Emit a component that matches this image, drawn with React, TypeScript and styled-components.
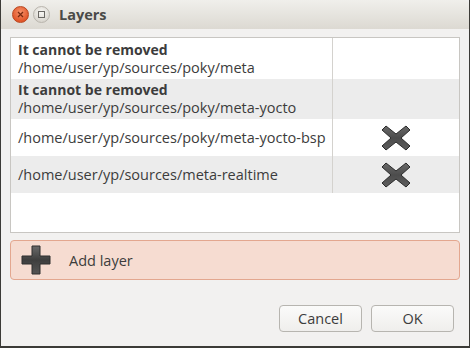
import React from "react";
import styled, { createGlobalStyle } from "styled-components";

const Global = createGlobalStyle`
  html, body { margin: 0; padding: 0; background: #3c3b37; }
  body { width: 470px; height: 348px; overflow: hidden; }
  * { box-sizing: border-box; }
`;

const Window = styled.div`
  width: 470px;
  height: 348px;
  display: flex;
  flex-direction: column;
  background: #f2f1f0;
  border: 1px solid #3c3b37;
  border-top: none;
  border-bottom-width: 2px;
  font-family: "Open Sans", "DejaVu Sans", sans-serif;
  color: #3c3c3c;
`;

const TitleBar = styled.div`
  height: 29px;
  flex: none;
  display: flex;
  align-items: center;
  padding-left: 11px;
  gap: 4px;
  background: linear-gradient(#f0efeb, #dcd9d2);
  border-top-left-radius: 5px;
  border-top-right-radius: 5px;
`;

const WinButton = styled.div<{ $close?: boolean }>`
  width: 17px;
  height: 17px;
  border-radius: 50%;
  display: flex;
  align-items: center;
  justify-content: center;
  background: ${(p) =>
    p.$close
      ? "radial-gradient(circle at 50% 35%, #f6926a, #e2572a 70%)"
      : "radial-gradient(circle at 50% 35%, #f8f7f4, #d9d6cf 75%)"};
  border: 1px solid ${(p) => (p.$close ? "#b8461f" : "#b9b5ad")};
`;

const Title = styled.div`
  margin-left: 5px;
  font-weight: bold;
  font-size: 14.5px;
  color: #4a4a48;
`;

const Body = styled.div`
  flex: 1;
  display: flex;
  flex-direction: column;
  padding: 8px 9px 0 9px;
`;

const ListFrame = styled.div`
  height: 196px;
  border: 1px solid #c8c6c2;
  background: #ffffff;
  display: flex;
  flex-direction: column;
`;

const Row = styled.div<{ $alt?: boolean; $h: number }>`
  display: grid;
  grid-template-columns: 322px 1fr;
  height: ${(p) => p.$h}px;
  background: ${(p) => (p.$alt ? "#ececec" : "#ffffff")};
`;

const PathCell = styled.div`
  display: flex;
  flex-direction: column;
  justify-content: center;
  padding-left: 7px;
  border-right: 1px solid #d4d2ce;
  font-size: 14.5px;
  line-height: 18px;
  color: #3c3c3c;
  white-space: nowrap;
`;

const Bold = styled.div`
  font-weight: bold;
  font-size: 14px;
`;

const ActionCell = styled.div`
  display: flex;
  align-items: center;
  justify-content: center;
`;

const AddBar = styled.div`
  margin-top: 7px;
  height: 40px;
  display: flex;
  align-items: center;
  padding-left: 10px;
  gap: 18px;
  background: #f6dcd1;
  border: 1px solid #e3a78f;
  border-radius: 4px;
  font-size: 14.5px;
  color: #3c3c3c;
`;

const Footer = styled.div`
  display: flex;
  justify-content: flex-end;
  gap: 9px;
  padding: 25px 6px 0 0;
`;

const Button = styled.button`
  width: 83px;
  height: 27px;
  border: 1px solid #b7b5b0;
  border-radius: 4px;
  background: linear-gradient(#fbfbfa, #efeeec);
  font-family: "Open Sans", "DejaVu Sans", sans-serif;
  font-size: 14.5px;
  color: #3c3c3c;
  padding: 0;
`;

const RemoveIcon = () => (
  <svg width="30" height="28" viewBox="0 0 30 28">
    <defs>
      <linearGradient id="xg" x1="0" y1="0" x2="0" y2="1">
        <stop offset="0" stopColor="#6a6a6a" />
        <stop offset="0.5" stopColor="#4c4c4c" />
        <stop offset="1" stopColor="#5e5e5e" />
      </linearGradient>
    </defs>
    <path
      d="M5 2 L15 10 L25 2 L29 6 L20 14 L29 22 L25 26 L15 18 L5 26 L1 22 L10 14 L1 6 Z"
      fill="url(#xg)"
      stroke="#2a2a2a"
      strokeWidth="1"
      strokeLinejoin="round"
    />
  </svg>
);

const AddIcon = () => (
  <svg width="30" height="30" viewBox="0 0 30 30">
    <defs>
      <linearGradient id="pg" x1="0" y1="0" x2="0" y2="1">
        <stop offset="0" stopColor="#6a6a6a" />
        <stop offset="0.5" stopColor="#3e3e3e" />
        <stop offset="1" stopColor="#555555" />
      </linearGradient>
    </defs>
    <path
      d="M11 1 H19 V11 H29 V19 H19 V29 H11 V19 H1 V11 H11 Z"
      fill="url(#pg)"
      stroke="#2e2e2e"
      strokeWidth="1"
    />
  </svg>
);

const rows = [
  { fixed: true, path: "/home/user/yp/sources/poky/meta", h: 41 },
  { fixed: true, path: "/home/user/yp/sources/poky/meta-yocto", h: 40 },
  { fixed: false, path: "/home/user/yp/sources/poky/meta-yocto-bsp", h: 37 },
  { fixed: false, path: "/home/user/yp/sources/meta-realtime", h: 37 },
];

export default function App() {
  return (
    <>
      <Global />
      <Window>
        <TitleBar>
          <WinButton $close>
            <svg width="7" height="7" viewBox="0 0 7 7">
              <path d="M1 1 L6 6 M6 1 L1 6" stroke="#7a2a10" strokeWidth="1.3" />
            </svg>
          </WinButton>
          <WinButton>
            <svg width="7" height="7" viewBox="0 0 7 7">
              <rect x="0.5" y="0.5" width="6" height="6" fill="none" stroke="#6a6864" />
            </svg>
          </WinButton>
          <Title>Layers</Title>
        </TitleBar>
        <Body>
          <ListFrame>
            {rows.map((r, i) => (
              <Row key={r.path} $alt={i % 2 === 1} $h={r.h}>
                <PathCell>
                  {r.fixed && <Bold>It cannot be removed</Bold>}
                  <div>{r.path}</div>
                </PathCell>
                <ActionCell>{!r.fixed && <RemoveIcon />}</ActionCell>
              </Row>
            ))}
          </ListFrame>
          <AddBar>
            <AddIcon />
            <span>Add layer</span>
          </AddBar>
          <Footer>
            <Button>Cancel</Button>
            <Button>OK</Button>
          </Footer>
        </Body>
      </Window>
    </>
  );
}
